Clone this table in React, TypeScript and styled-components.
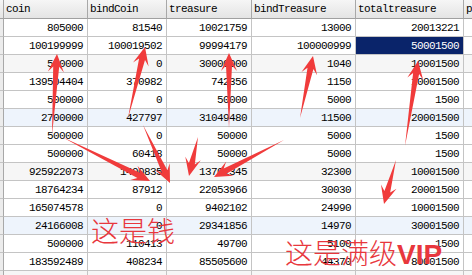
import React from "react";
import styled, { createGlobalStyle } from "styled-components";

const GlobalStyle = createGlobalStyle`
  html, body {
    margin: 0;
    padding: 0;
    background: #ffffff;
    overflow: hidden;
  }
`;

const Page = styled.div`
  position: relative;
  width: 472px;
  height: 275px;
  overflow: hidden;
  background: #ffffff;
  font-family: "Liberation Mono", "DejaVu Sans Mono", monospace;
  font-size: 11px;
  letter-spacing: -0.6px;
  color: #000;
`;

const cols = "4px 84px 79px 85px 104px 108px 60px";

const HeaderRow = styled.div`
  display: grid;
  grid-template-columns: ${cols};
  height: 19px;
`;

const HeaderCell = styled.div`
  box-sizing: border-box;
  height: 19px;
  padding-left: 2px;
  display: flex;
  align-items: center;
  white-space: nowrap;
  overflow: hidden;
  background: linear-gradient(#f6f6f6, #e4e4e4);
  border-right: 1px solid #a8a8a8;
  border-bottom: 1px solid #a0a0a0;
`;

const Row = styled.div<{ $tint?: "gray" | "blue" }>`
  display: grid;
  grid-template-columns: ${cols};
  height: 18px;
  background: ${(p) =>
    p.$tint === "gray" ? "#f6f6f6" : p.$tint === "blue" ? "#eef4fc" : "#ffffff"};
`;

const Cell = styled.div<{ $selected?: boolean }>`
  box-sizing: border-box;
  height: 18px;
  padding-right: 4px;
  display: flex;
  align-items: center;
  justify-content: flex-end;
  white-space: nowrap;
  overflow: hidden;
  border-right: 1px solid #c4c4c4;
  border-bottom: 1px solid #c4c4c4;
  background: ${(p) => (p.$selected ? "#0a246a" : "transparent")};
  color: ${(p) => (p.$selected ? "#ffffff" : "#000000")};
`;

const Gutter = styled.div`
  box-sizing: border-box;
  height: 18px;
  background: #ececec;
  border-right: 1px solid #a8a8a8;
  border-bottom: 1px solid #c4c4c4;
`;

const Arrows = styled.svg`
  position: absolute;
  left: 0;
  top: 0;
  pointer-events: none;
`;

const Note = styled.div<{ $left: number; $top: number }>`
  position: absolute;
  left: ${(p) => p.$left}px;
  top: ${(p) => p.$top}px;
  font-family: "Noto Sans CJK SC", "Liberation Sans", sans-serif;
  font-size: 28px;
  font-weight: 300;
  line-height: 1;
  letter-spacing: 0;
  color: #e8373d;
  white-space: nowrap;
`;

const Latin = styled.span`
  font-family: "Liberation Sans", sans-serif;
  font-weight: 700;
`;

const headers = ["coin", "bindCoin", "treasure", "bindTreasure", "totaltreasure", "p"];

const data: string[][] = [
  ["805000", "81540", "10021759", "13000", "20013221"],
  ["100199999", "100019502", "99994179", "100000999", "50001500"],
  ["500000", "0", "30000000", "1040", "10001500"],
  ["139504404", "370982", "742356", "1150", "10001500"],
  ["500000", "0", "50000", "5000", "1500"],
  ["2700000", "427797", "31049480", "11500", "20001500"],
  ["500000", "0", "50000", "5000", "1500"],
  ["500000", "60418", "50000", "5000", "1500"],
  ["925922073", "1400835", "13701345", "32300", "10001500"],
  ["18764234", "87912", "22053966", "30030", "20001500"],
  ["165074578", "0", "9402102", "24990", "10001500"],
  ["24166008", "0", "29341856", "14970", "30001500"],
  ["500000", "110413", "49700", "5100", "1500"],
  ["183592489", "408234", "85505600", "44370", "80001500"],
  ["", "", "", "", ""],
];

const tintFor = (i: number): "gray" | "blue" | undefined => {
  if (i % 3 !== 2) return undefined;
  return Math.floor(i / 3) % 2 === 0 ? "gray" : "blue";
};

// tail -> tip, drawn like a screenshot-tool arrow (thin tail, fat head)
const arrows: [number, number, number, number][] = [
  [52, 135, 57, 54],
  [128, 118, 145, 47],
  [229, 128, 229, 53],
  [300, 118, 313, 56],
  [405, 146, 418, 61],
  [62, 137, 150, 181],
  [143, 125, 170, 183],
  [198, 137, 189, 176],
  [284, 140, 214, 177],
  [396, 160, 384, 204],
];

function arrowPoints(tx: number, ty: number, px: number, py: number) {
  const hl = 18;
  const hw = 16;
  const sw = 6;
  const dx = px - tx;
  const dy = py - ty;
  const len = Math.hypot(dx, dy);
  const ux = dx / len;
  const uy = dy / len;
  const nx = -uy;
  const ny = ux;
  const bx = px - ux * hl;
  const by = py - uy * hl;
  const jx = px - ux * hl * 0.7;
  const jy = py - uy * hl * 0.7;
  const pts = [
    [tx, ty],
    [jx + (nx * sw) / 2, jy + (ny * sw) / 2],
    [bx + (nx * hw) / 2, by + (ny * hw) / 2],
    [px, py],
    [bx - (nx * hw) / 2, by - (ny * hw) / 2],
    [jx - (nx * sw) / 2, jy - (ny * sw) / 2],
  ];
  return pts.map((p) => `${p[0].toFixed(1)},${p[1].toFixed(1)}`).join(" ");
}

export default function App() {
  return (
    <Page>
      <GlobalStyle />
      <HeaderRow>
        <HeaderCell />
        {headers.map((h) => (
          <HeaderCell key={h}>{h}</HeaderCell>
        ))}
      </HeaderRow>
      {data.map((row, i) => (
        <Row key={i} $tint={tintFor(i)}>
          <Gutter />
          {row.map((v, j) => (
            <Cell key={j} $selected={i === 1 && j === 4}>
              {v}
            </Cell>
          ))}
          <Cell />
        </Row>
      ))}

      <Arrows width={472} height={275} viewBox="0 0 472 275">
        {arrows.map(([tx, ty, px, py], k) => (
          <polygon key={k} points={arrowPoints(tx, ty, px, py)} fill="#f03b3b" />
        ))}
      </Arrows>

      <Note $left={91} $top={216}>这是钱</Note>
      <Note $left={285} $top={238}>
        这是满级<Latin>VIP</Latin>
      </Note>
    </Page>
  );
}
